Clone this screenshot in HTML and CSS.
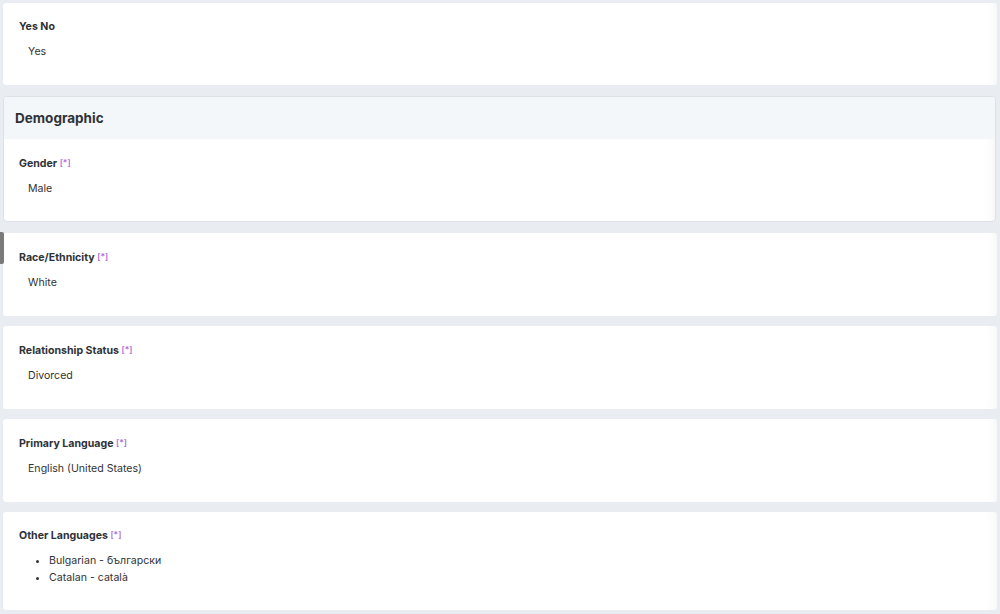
FILE: index.html
```html
<!DOCTYPE html>
<html>
<head>
<meta charset="utf-8">
<link rel="stylesheet" href="styles.css">
</head>
<body>
<div class="page">
  <div class="card first">
    <div class="label">Yes No</div>
    <div class="value">Yes</div>
  </div>

  <div class="section">
    <div class="section-head">Demographic</div>
    <div class="section-body">
      <div class="label">Gender <span class="req">[*]</span></div>
      <div class="value">Male</div>
    </div>
  </div>

  <div class="card tabbed">
    <span class="side-tab"></span>
    <div class="label">Race/Ethnicity <span class="req">[*]</span></div>
    <div class="value">White</div>
  </div>

  <div class="card">
    <div class="label">Relationship Status <span class="req">[*]</span></div>
    <div class="value">Divorced</div>
  </div>

  <div class="card">
    <div class="label">Primary Language <span class="req">[*]</span></div>
    <div class="value">English (United States)</div>
  </div>

  <div class="card last">
    <div class="label">Other Languages <span class="req">[*]</span></div>
    <ul class="list">
      <li>Bulgarian - български</li>
      <li>Catalan - català</li>
    </ul>
  </div>
</div>
</body>
</html>
```

FILE: styles.css
```css
html, body {
  margin: 0;
  padding: 0;
  background: #e9ecf0;
  font-family: Inter, "Noto Sans", "Liberation Sans", sans-serif;
  color: #333;
}

.page {
  padding: 3px 3px 0 3px;
  display: flex;
  flex-direction: column;
  gap: 10px;
}

.card {
  position: relative;
  background: #fff;
  border-radius: 3px;
  padding: 17.5px 16px 26.5px 16px;
  box-shadow: inset -14px 0 14px -14px rgba(0, 0, 0, 0.06);
}

.card.first {
  padding-top: 17px;
  padding-bottom: 26px;
  margin-bottom: 1px;
}

.label {
  font-size: 10.6px;
  line-height: 14px;
  font-weight: 700;
  color: #2f3236;
  height: 14px;
}

.req {
  font-size: 8.5px;
  font-weight: 600;
  color: #b06ad9;
  position: relative;
  top: -1px;
}

.value {
  font-size: 10.6px;
  line-height: 14px;
  color: #333;
  padding-left: 9px;
  margin-top: 11px;
}

.section {
  background: #fff;
  border: 1px solid #dde1e6;
  border-radius: 4px;
  overflow: hidden;
  margin-right: 1px;
  margin-bottom: 1px;
  box-shadow: inset -14px 0 14px -14px rgba(0, 0, 0, 0.06);
}

.section-head {
  background: #f4f7fa;
  height: 42px;
  line-height: 43px;
  padding-left: 11px;
  font-size: 13.5px;
  font-weight: 700;
  color: #2f3236;
}

.section-body {
  padding: 18px 15px 25px 15px;
}

.side-tab {
  position: absolute;
  left: -3px;
  top: -1px;
  width: 4px;
  height: 32px;
  background: #7a7a7a;
  border-radius: 0 2px 2px 0;
}

.list {
  margin: 9px 0 0 0;
  padding-left: 30px;
  font-size: 10.6px;
  line-height: 17px;
  color: #333;
}

.card.last {
  padding-top: 17px;
  padding-bottom: 24px;
}
```
